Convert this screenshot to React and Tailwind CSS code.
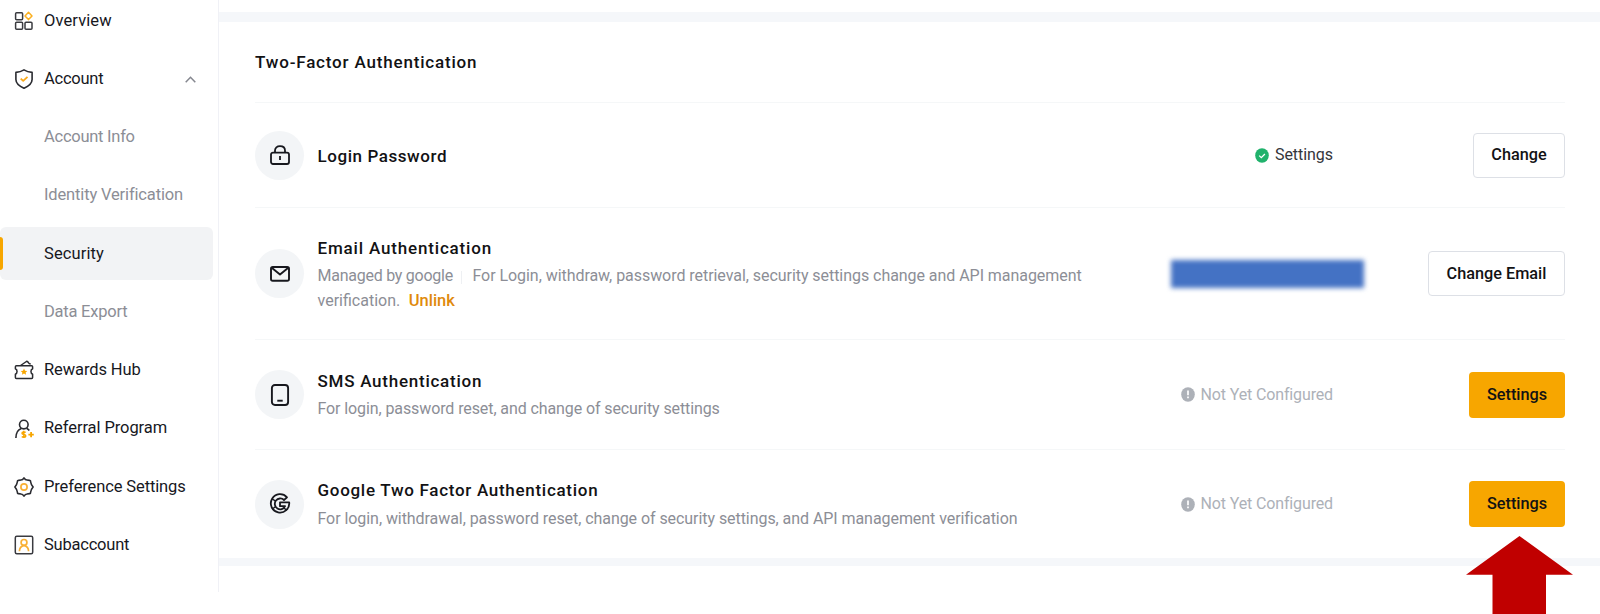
import clsx from 'clsx';

function OverviewIcon() {
    return (
        <svg width="20" height="20" viewBox="0 0 20 20" fill="none" stroke="#3a3b40" strokeWidth="1.5">
            <rect x="1.6" y="1.8" width="7" height="7" rx="1" />
            <rect x="1.6" y="11.2" width="7" height="7" rx="1" />
            <rect x="11" y="11.2" width="7" height="7" rx="1" />
            <path d="M14.5 1.2 18 4.9 14.5 8.6 11 4.9Z" stroke="#fbb021" strokeLinejoin="round" />
        </svg>
    );
}

function AccountIcon() {
    return (
        <svg width="20" height="20" viewBox="0 0 20 20" fill="none" strokeWidth="1.6" strokeLinejoin="round">
            <path d="M10 .9C7.6 2.4 5 3.2 1.9 3.4v7.2c0 4 3.6 6.7 8.1 8.7 4.5-2 8.1-4.7 8.1-8.7V3.4C15 3.2 12.4 2.4 10 .9Z" stroke="#2a2b30" />
            <path d="m6.7 9.6 2.5 2.3 4.3-4" stroke="#f9a91a" strokeWidth="1.8" />
        </svg>
    );
}

function RewardsIcon() {
    return (
        <svg width="20" height="20" viewBox="0 0 20 20" fill="none" strokeWidth="1.5" strokeLinejoin="round">
            <path d="M2.4 5.7h15.2c.6 0 1 .4 1 1v2.1c-2.2 1-2.2 4.4 0 5.4v3.3c0 .6-.4 1-1 1H2.4c-.6 0-1-.4-1-1v-3.3c2.2-1 2.2-4.4 0-5.4V6.700c0-.6.4-1 1-1Z" stroke="#2a2b30" />
            <path d="M6.6 5.5 12.4 1.5c.8-.4 1.5.2 2.2 1.4.6.9 1.3 1 2.1 1.2" stroke="#2a2b30" />
            <path d="m10 8.600 1 2.1 2.3.2-1.700 1.500.5 2.300-2.100-1.200-2.100 1.200.5-2.300-1.700-1.500 2.300-.2Z" fill="#f7a600" />
        </svg>
    );
}

function ReferralIcon() {
    return (
        <svg width="20" height="20" viewBox="0 0 20 20" fill="none" strokeWidth="1.6">
            <circle cx="9.8" cy="5.6" r="4.3" stroke="#2a2b30" />
            <path d="M7.3 9.4C3.6 10.7 1.9 14 1.9 19M12.6 9.2c1.2.7 2 1.3 2.7 2.3" stroke="#2a2b30" />
            <path d="M11.7 13.5c-.7-.7-3.700-.8-3.700.8 0 1.600 3.800.8 3.800 2.600 0 1.700-3.200 1.500-4 .6M9.800 11.800v7.200" stroke="#f7a600" strokeWidth="1.5" />
            <path d="M14.4 15.6h5.4M17.1 12.9v5.4" stroke="#f7a600" strokeWidth="1.8" />
        </svg>
    );
}

function PreferenceIcon() {
    return (
        <svg width="20" height="20" viewBox="0 0 20 20" fill="none" strokeWidth="1.6" strokeLinejoin="round">
            <path
                d="M10 .9Q11.2 3 13 3L15.6 3.4Q16.8 3.5 16.8 5.5 16.9 7.2 19.1 10 16.9 12.8 16.8 14.5 16.8 16.5 15.6 16.6L13 17Q11.2 17 10 19.1 8.8 17 7 17L4.4 16.6Q3.2 16.5 3.2 14.5 3.1 12.8.9 10 3.1 7.2 3.2 5.5 3.2 3.5 4.4 3.4L7 3Q8.8 3 10 .9Z"
                stroke="#2a2b30"
            />
            <circle cx="10" cy="10" r="3.1" stroke="#f9b035" strokeWidth="1.7" />
        </svg>
    );
}

function SubaccountIcon() {
    return (
        <svg width="20" height="20" viewBox="0 0 20 20" fill="none" strokeWidth="1.5">
            <rect x="1.3" y="1.3" width="17.4" height="17.4" rx="1.5" stroke="#3a3b40" />
            <circle cx="10" cy="7.4" r="2.9" stroke="#f9b035" strokeWidth="1.7" />
            <path d="M5.4 16.2c.1-3.3 1.7-5 4.6-5.8 2.9.8 4.5 2.5 4.6 5.8" stroke="#f9b035" strokeWidth="1.7" />
        </svg>
    );
}

function LockIcon() {
    return (
        <svg width="22" height="22" viewBox="0 0 22 22" fill="none" stroke="#17181e" strokeWidth="1.8">
            <rect x="2" y="8.6" width="18" height="11.4" rx="2" />
            <path d="M6 8.4V6.6C6 3.8 8 2.100 11 2.100s5 1.700 5 4.500v1.800M11 12v4" />
        </svg>
    );
}

function MailIcon() {
    return (
        <svg width="22" height="22" viewBox="0 0 22 22" fill="none" stroke="#17181e" strokeWidth="1.9" strokeLinejoin="round">
            <rect x="2" y="4" width="18" height="13.8" rx="1.8" />
            <path d="m3 5 8 6.5L19 5" />
        </svg>
    );
}

function PhoneIcon() {
    return (
        <svg width="22" height="22" viewBox="0 0 22 22" fill="none" stroke="#17181e" strokeWidth="1.9">
            <rect x="2.9" y="1" width="16.2" height="20" rx="3" />
            <path d="M8.3 16.7h5.4" />
        </svg>
    );
}

function GoogleIcon() {
    return (
        <svg width="22" height="22" viewBox="0 0 22 22" fill="none" stroke="#17181e" strokeWidth="1.8" strokeLinejoin="round">
            <path d="M18 4.3A9.2 9.2 0 1 0 20.2 9.3H11V13.2h5.1a5.4 5.4 0 1 1-1.1-6.2Z" />
            <path d="m3.2 6 3.5 2.2M3.2 16l3.5-2.4M14.8 14.9l2.9 2.4" strokeWidth="1.4" />
        </svg>
    );
}

function CheckBadge() {
    return (
        <svg width="14" height="15" viewBox="0 0 14 15" fill="none">
            <ellipse cx="7" cy="7.5" rx="6.8" ry="7.3" fill="#20b26c" />
            <path d="m4.2 7.6 2.1 2 3.6-3.6" stroke="#fff" strokeWidth="1.3" />
        </svg>
    );
}

function WarnBadge() {
    return (
        <svg width="14" height="15" viewBox="0 0 14 15" fill="none">
            <ellipse cx="7" cy="7.5" rx="6.8" ry="7.3" fill="#adb1b8" />
            <path d="M7 3.6v4.6M7 9.5v1.7" stroke="#fff" strokeWidth="1.7" />
        </svg>
    );
}

const navItems = [
    { name: 'Overview', icon: OverviewIcon, track: 'tracking-[0.1px]' },
    { name: 'Account', icon: AccountIcon, expanded: true, track: 'tracking-[-0.25px]' },
    { name: 'Account Info', sub: true, track: 'tracking-[-0.26px]' },
    { name: 'Identity Verification', sub: true, track: 'tracking-[-0.15px]' },
    { name: 'Security', sub: true, active: true, track: 'tracking-[0.12px]' },
    { name: 'Data Export', sub: true, track: 'tracking-[-0.23px]' },
    { name: 'Rewards Hub', icon: RewardsIcon, track: 'tracking-[-0.1px]' },
    { name: 'Referral Program', icon: ReferralIcon, track: 'tracking-[-0.08px]' },
    { name: 'Preference Settings', icon: PreferenceIcon, track: 'tracking-[-0.12px]' },
    { name: 'Subaccount', icon: SubaccountIcon, track: 'tracking-[-0.22px]' },
];

function Sidebar() {
    return (
        <aside className="w-[219px] h-[592px] shrink-0 border-r border-[#f0f1f6] overflow-hidden">
            <nav className="-mt-[5.6px] flex flex-col gap-[5.25px]">
                {navItems.map((item) => (
                    <div
                        key={item.name}
                        className={clsx(
                            'flex h-[53px] w-[213px] shrink-0 items-center text-[16.5px] whitespace-nowrap',
                            item.active && 'rounded-md bg-[#f2f3f5]',
                            item.sub && !item.active ? 'text-[#8c8e96]' : 'text-[#17181e]'
                        )}
                    >
                        <div className="flex w-[44px] shrink-0 items-center">
                            {item.active && <span className="h-[33px] w-[2.5px] rounded-r-sm bg-[#f7a600]" />}
                            {item.icon && <span className="ml-[13.5px]"><item.icon /></span>}
                        </div>
                        <span className={item.track}>{item.name}</span>
                        {item.expanded && (
                            <svg className="mr-[17px] ml-auto" width="11" height="7" viewBox="0 0 11 7" fill="none" stroke="#85878f" strokeWidth="1.5">
                                <path d="m.7 6.3 4.8-5 4.8 5" />
                            </svg>
                        )}
                    </div>
                ))}
            </nav>
        </aside>
    );
}

function Row({ icon: Icon, title, track, height, status, action, primary, last, children }) {
    return (
        <div className={clsx('flex items-center', height, !last && 'border-b border-[#f5f7f8]')}>
            <div className="flex size-[49px] shrink-0 items-center justify-center rounded-full bg-[#f3f5f7]">
                <Icon />
            </div>
            <div className="ml-[13.5px] w-[790px] shrink-0">
                <h3 className={clsx('text-[17px] leading-[26px] font-medium text-[#121214]', track)}>{title}</h3>
                {children}
            </div>
            <div className="flex flex-1 items-center justify-end">{status}</div>
            <div className="flex w-[232px] shrink-0 justify-end">
                <button
                    className={clsx(
                        'rounded pt-px text-[16.25px] font-medium whitespace-nowrap text-[#121214]',
                        primary ? 'h-[46px] w-[96px] bg-[#f7a600]' : 'h-[45px] border border-[#dde0e6]',
                        action === 'Change' && 'w-[92px]',
                        action === 'Change Email' && 'w-[137px]'
                    )}
                >
                    {action}
                </button>
            </div>
        </div>
    );
}

function NotConfigured() {
    return (
        <div className="flex items-center gap-[5.5px] text-[16px] tracking-[-0.14px] text-[#adb1b8]">
            <WarnBadge />
            <span>Not Yet Configured</span>
        </div>
    );
}

export default function App() {
    return (
        <div className="relative flex h-[614px] w-[1600px] overflow-hidden bg-white font-['Roboto','Noto_Sans',sans-serif]">
            <Sidebar />

            <main className="flex-1 pt-[12px]">
                <div className="h-[10px] bg-[#f5f7fa]" />

                <section className="h-[536px] pr-[35px] pl-[36px]">
                    <h2 className="flex h-[81px] items-center border-b border-[#f5f7f8] pt-[2px] text-[17px] font-medium tracking-[0.82px] text-[#121214]">
                        Two-Factor Authentication
                    </h2>

                    <Row
                        icon={LockIcon}
                        title="Login Password"
                        track="tracking-[0.57px] pt-px"
                        height="h-[105px]"
                        action="Change"
                        status={
                            <div className="flex items-center gap-[5.5px] text-[16px] tracking-[-0.05px] text-[#34353b]">
                                <CheckBadge />
                                <span>Settings</span>
                            </div>
                        }
                    />

                    <Row
                        icon={MailIcon}
                        title="Email Authentication"
                        track="tracking-[0.83px]"
                        height="h-[132px]"
                        action="Change Email"
                        status={<div className="-mr-[31px] h-[28px] w-[193px] bg-[#4472c4] blur-[2.5px]" />}
                    >
                        <p className="mt-[2px] text-[16px] leading-[25px] whitespace-nowrap text-[#8c8e96]">
                            <span className="tracking-[-0.25px]">Managed by google</span>
                            <span className="mr-[10px] ml-[8.5px] inline-block h-[13px] w-px translate-y-[3px] bg-[#eef0f3]" />
                            <span className="tracking-[-0.05px]">For Login, withdraw, password retrieval, security settings change and API management</span>
                            <br />
                            <span>verification.</span>
                            <span className="ml-[8.5px] text-[16.5px] font-medium text-[#df8a0c]">Unlink</span>
                        </p>
                    </Row>

                    <Row
                        icon={PhoneIcon}
                        title="SMS Authentication"
                        track="tracking-[0.75px]"
                        height="h-[110px]"
                        action="Settings"
                        primary
                        status={<NotConfigured />}
                    >
                        <p className="mt-[2px] text-[16px] leading-[25px] tracking-[-0.1px] text-[#8c8e96]">
                            For login, password reset, and change of security settings
                        </p>
                    </Row>

                    <Row
                        icon={GoogleIcon}
                        title="Google Two Factor Authentication"
                        track="tracking-[0.71px]"
                        height="h-[108px]"
                        action="Settings"
                        primary
                        last
                        status={<NotConfigured />}
                    >
                        <p className="mt-[3px] text-[16px] leading-[25px] tracking-[-0.06px] text-[#8c8e96]">
                            For login, withdrawal, password reset, change of security settings, and API management verification
                        </p>
                    </Row>
                </section>

                <div className="h-[8px] bg-[#f5f7fa]" />
            </main>

            {/* Callout arrow pointing at the last Settings button */}
            <svg className="absolute top-[536px] left-[1466px]" width="107" height="78" viewBox="0 0 107 78">
                <path d="M53.5 0 107 38.7H80V78H26.5V38.7H0Z" fill="#c00000" />
            </svg>
        </div>
    );
}
